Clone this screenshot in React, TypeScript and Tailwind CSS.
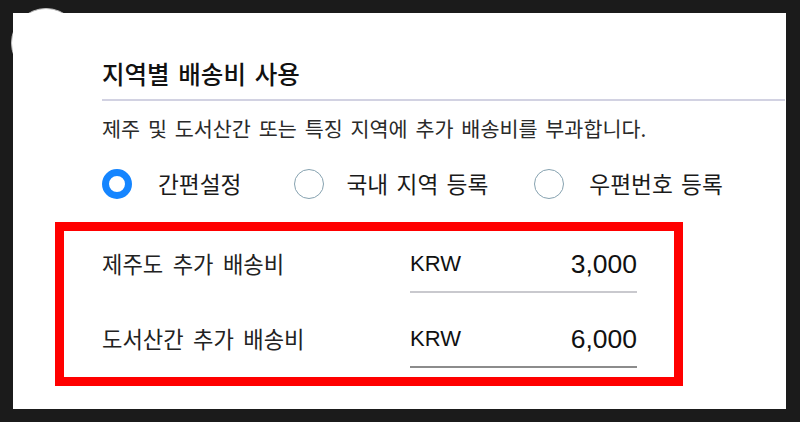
import React from "react";

const KR = "font-['Noto_Sans_CJK_KR','Noto_Sans',sans-serif]";
const LAT = "font-['Liberation_Sans',Arial,sans-serif]";

function Radio({ checked }: { checked?: boolean }) {
  return checked ? (
    <div className="w-[30px] h-[30px] rounded-full border-[7px] border-[#1585ff] bg-white shrink-0" />
  ) : (
    <div className="w-[30px] h-[30px] rounded-full border-[1.5px] border-[#86a2b0] bg-white shrink-0" />
  );
}

export default function App() {
  return (
    <div className="relative w-[800px] h-[422px] bg-[#1b1b1b] pt-[13px] pl-[13px] pr-[14px] pb-[13px] overflow-hidden">
      <div className="absolute left-[11px] top-[8px] w-[70px] h-[70px] rounded-full bg-white border border-[#bdbdbd] z-0" />
      <div className="relative z-10 h-full bg-white pl-[42px] pt-[46px]">
        <div className={`pl-[47px] pr-[1px] ${KR} [word-spacing:0.2em]`}>
          <div className="text-[24.5px] leading-[30px] font-medium text-[#111]">지역별 배송비 사용</div>
          <div className="mt-[10px] h-[2px] bg-[#d2d2e2]" />
          <div className="mt-[14px] text-[20.7px] leading-[26px] text-[#2a2a2a]">
            제주 및 도서산간 또는 특징 지역에 추가 배송비를 부과합니다.
          </div>
          <div className="mt-[28px] h-[30px] flex items-center text-[22.7px] text-[#1a1a1a]">
            <Radio checked />
            <span className="ml-[26px]">간편설정</span>
            <div className="ml-[52px]">
              <Radio />
            </div>
            <span className="ml-[23px]">국내 지역 등록</span>
            <div className="ml-[46px]">
              <Radio />
            </div>
            <span className="ml-[25px]">우편번호 등록</span>
          </div>
        </div>
        <div className="mt-[23px] w-[628px] border-[9px] border-[#ff0000] pl-[38px] pb-[9px]">
          <div className="flex h-[62px]">
            <div className={`w-[308px] pt-[17px] text-[22.2px] leading-[30px] text-[#222] ${KR} [word-spacing:0.2em]`}>
              제주도 추가 배송비
            </div>
            <div className={`w-[227px] border-b-2 border-[#c9c9ce] flex justify-between pt-[18px] leading-[30px] text-[#111] ${LAT}`}>
              <span className="text-[22px]">KRW</span>
              <span className="text-[26.5px]">3,000</span>
            </div>
          </div>
          <div className="flex h-[75px]">
            <div className={`w-[308px] pt-[30px] text-[22.2px] leading-[30px] text-[#222] ${KR} [word-spacing:0.2em]`}>
              도서산간 추가 배송비
            </div>
            <div className={`w-[227px] border-b-2 border-[#8c8c8c] flex justify-between pt-[31px] leading-[30px] text-[#111] ${LAT}`}>
              <span className="text-[22px]">KRW</span>
              <span className="text-[26.5px]">6,000</span>
            </div>
          </div>
        </div>
      </div>
    </div>
  );
}
